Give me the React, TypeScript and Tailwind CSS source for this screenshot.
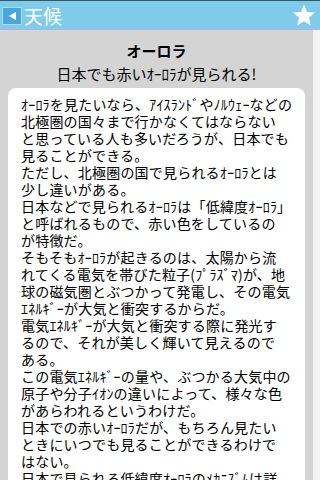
import React from "react";

const lines = [
  "ｵｰﾛﾗを見たいなら、ｱｲｽﾗﾝﾄﾞやﾉﾙｳｪｰなどの",
  "北極圏の国々まで行かなくてはならない",
  "と思っている人も多いだろうが、日本でも",
  "見ることができる。",
  "ただし、北極圏の国で見られるｵｰﾛﾗとは",
  "少し違いがある。",
  "日本などで見られるｵｰﾛﾗは「低緯度ｵｰﾛﾗ」",
  "と呼ばれるもので、赤い色をしているの",
  "が特徴だ。",
  "そもそもｵｰﾛﾗが起きるのは、太陽から流",
  "れてくる電気を帯びた粒子(ﾌﾟﾗｽﾞﾏ)が、地",
  "球の磁気圏とぶつかって発電し、その電気",
  "ｴﾈﾙｷﾞｰが大気と衝突するからだ。",
  "電気ｴﾈﾙｷﾞｰが大気と衝突する際に発光す",
  "るので、それが美しく輝いて見えるので",
  "ある。",
  "この電気ｴﾈﾙｷﾞｰの量や、ぶつかる大気中の",
  "原子や分子ｲｵﾝの違いによって、様々な色",
  "があらわれるというわけだ。",
  "日本での赤いｵｰﾛﾗだが、もちろん見たい",
  "ときにいつでも見ることができるわけで",
  "はない。",
  "日本で見られる低緯度ｵｰﾛﾗのﾒｶﾆｽﾞﾑは詳",
  "しくはまだ分かっていない。",
];

const App = () => {
  return (
    <div className="w-[320px] h-[480px] overflow-hidden bg-[#d4d4d4] flex flex-col font-['Noto_Sans_CJK_JP',sans-serif]">
      <div className="h-[30px] shrink-0 border-t border-[#2f5b6c] bg-[#80cbe9] flex items-center justify-between pl-[2px] pr-[3px]">
        <div className="flex items-center">
          <div className="w-[20px] h-[18px] bg-[#4aa6dc] border border-[#a8dcf4] flex items-center justify-center">
            <svg width="10" height="10" viewBox="0 0 10 10">
              <polygon points="2,5 9,1 9,9" fill="#ffffff" />
            </svg>
          </div>
          <span className="ml-[2px] text-white text-[19px] leading-[24px]">天候</span>
        </div>
        <svg width="26" height="25" viewBox="0 0 24 24">
          <polygon
            points="12,1.5 14.9,8.6 22.5,9.2 16.7,14.1 18.5,21.6 12,17.6 5.5,21.6 7.3,14.1 1.5,9.2 9.1,8.6"
            fill="#ffffff"
          />
        </svg>
      </div>
      <div className="flex-1 flex min-h-0">
        <div className="flex-1 flex flex-col px-[8px] min-w-0">
          <h1 className="mt-[11px] text-center text-[15px] leading-[20px] font-bold text-black">オーロラ</h1>
          <p className="mt-[3px] text-center text-[15px] leading-[20px] text-black">日本でも赤いｵｰﾛﾗが見られる!</p>
          <div className="mt-[4px] bg-white rounded-[8px] pt-[8px] pl-[13px] pb-4 text-[14px] leading-[17px] tracking-[0.2px] text-black">
            {lines.map((l, i) => (
              <div key={i} className="whitespace-nowrap">{l}</div>
            ))}
          </div>
        </div>
        <div className="w-[7px] bg-[#f3f3f3]" />
      </div>
    </div>
  );
};

export default App;
